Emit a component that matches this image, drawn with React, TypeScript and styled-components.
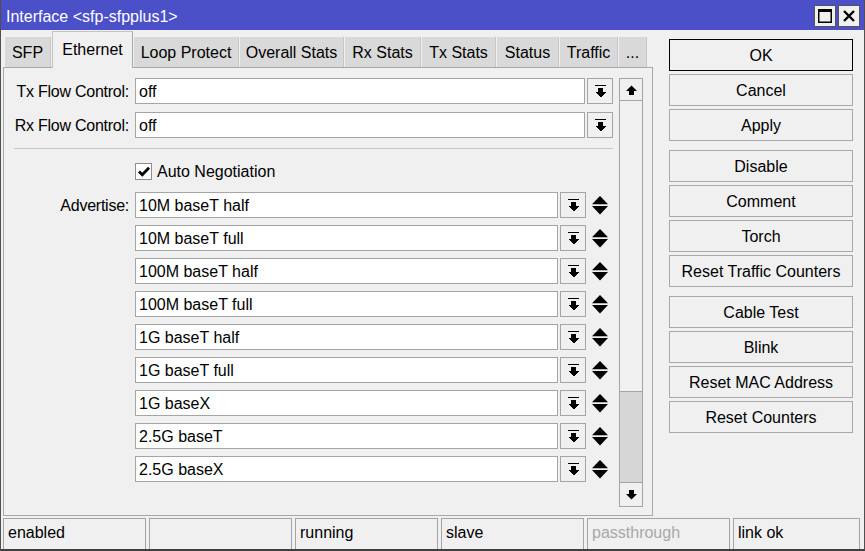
import React from "react";
import styled, { createGlobalStyle } from "styled-components";

const GlobalStyle = createGlobalStyle`
  html, body { margin: 0; padding: 0; background: #f0f0f0; }
  body { font-family: "Liberation Sans", Arial, sans-serif; font-size: 16px; color: #000; }
  * { box-sizing: border-box; }
`;

const Window = styled.div`
  width: 865px;
  height: 551px;
  display: flex;
  flex-direction: column;
  background: #f0f0f0;
  border-left: 1px solid #505050;
  border-right: 1px solid #505050;
  border-bottom: 2px solid #404040;
  overflow: hidden;
`;

const TitleBar = styled.div`
  height: 30px;
  flex: none;
  background: #4b4fc8;
  display: flex;
  align-items: center;
  padding: 1px 4px 0 6px;
  margin: 0 -1px;
`;

const TitleText = styled.div`
  flex: 1;
  color: #fff;
  font-size: 16px;
  padding-top: 2px;
  white-space: nowrap;
`;

const TitleButtons = styled.div`
  display: flex;
  gap: 2px;
  margin-right: 1px;
`;

const TitleButton = styled.div`
  width: 22px;
  height: 22px;
  background: #f0f0f0;
  border: 1px solid #555;
  display: flex;
  align-items: center;
  justify-content: center;
`;

const Main = styled.div`
  height: 486px;
  flex: none;
  display: flex;
  padding: 1px 0 0 2px;
`;

const LeftColumn = styled.div`
  width: 650px;
  display: flex;
  flex-direction: column;
`;

const TabBar = styled.div`
  height: 36px;
  display: flex;
  align-items: flex-end;
  padding-left: 2px;
`;

const Tab = styled.div<{ $active?: boolean; $w: number }>`
  width: ${(p) => p.$w}px;
  margin-right: 1px;
  height: ${(p) => (p.$active ? 37 : 30)}px;
  margin-bottom: ${(p) => (p.$active ? -1 : 0)}px;
  position: relative;
  z-index: ${(p) => (p.$active ? 2 : 1)};
  background: ${(p) => (p.$active ? "#f0f0f0" : "#d9d9d9")};
  border-top: ${(p) => (p.$active ? "1px solid #c4c4c4" : "none")};
  border-left: ${(p) => (p.$active ? "1px solid #c4c4c4" : "none")};
  border-right: 1px solid ${(p) => (p.$active ? "#a8a8a8" : "#c6c6c6")};
  display: flex;
  align-items: center;
  justify-content: center;
  padding-top: 2px;
  padding-bottom: ${(p) => (p.$active ? 3 : 0)}px;
  white-space: nowrap;
  font-size: 16px;
`;

const Panel = styled.div`
  height: 449px;
  border: 1px solid #a8a8a8;
  display: flex;
  padding: 10px 9px 8px 0;
`;

const Content = styled.div`
  flex: 1;
  display: flex;
  flex-direction: column;
`;

const FieldGroup = styled.div<{ $gap: number; $top?: number }>`
  display: flex;
  flex-direction: column;
  gap: ${(p) => p.$gap}px;
  margin-top: ${(p) => p.$top ?? 0}px;
`;

const FieldRow = styled.div`
  display: flex;
  align-items: center;
  height: 26px;
`;

const Label = styled.div`
  width: 125px;
  margin-right: 6px;
  padding-top: 2px;
  text-align: right;
  white-space: nowrap;
  letter-spacing: -0.25px;
  font-size: 16px;
`;

const Field = styled.div`
  flex: 1;
  height: 26px;
  background: #fff;
  border: 1px solid #a5a5a5;
  display: flex;
  align-items: center;
  padding: 2px 0 0 3px;
  font-size: 16px;
  white-space: nowrap;
`;

const DropButton = styled.div`
  width: 26px;
  height: 26px;
  margin-left: 2px;
  background: #f0f0f0;
  border: 1px solid #a5a5a5;
  display: flex;
  align-items: center;
  justify-content: center;
`;

const UpDownCell = styled.div`
  width: 27px;
  height: 26px;
  display: flex;
  align-items: center;
  justify-content: center;
`;

const Separator = styled.div`
  height: 1px;
  background: #c6c6c6;
  margin: 10px 0 0 10px;
`;

const CheckRow = styled.div`
  display: flex;
  align-items: center;
  gap: 5px;
  height: 17px;
  margin-top: 14px;
  padding-left: 131px;
  font-size: 16px;
`;

const CheckText = styled.span`
  padding-top: 0;
`;

const CheckBox = styled.div`
  width: 17px;
  height: 17px;
  background: #fff;
  border: 1px solid #8e8e8e;
  display: flex;
  align-items: center;
  justify-content: center;
`;

const Scrollbar = styled.div`
  width: 24px;
  margin-left: 6px;
  border: 1px solid #a5a5a5;
  display: flex;
  flex-direction: column;
  background: #d6d6d6;
`;

const ScrollButton = styled.div<{ $down?: boolean }>`
  height: ${(p) => (p.$down ? 24 : 22)}px;
  background: #f0f0f0;
  border-top: ${(p) => (p.$down ? "1px solid #a5a5a5" : "none")};
  border-bottom: ${(p) => (p.$down ? "none" : "1px solid #a5a5a5")};
  display: flex;
  align-items: center;
  justify-content: center;
`;

const ScrollThumb = styled.div`
  height: 291px;
  background: #f0f0f0;
  border-bottom: 1px solid #a5a5a5;
`;

const ScrollTrack = styled.div`
  flex: 1;
  background: #d6d6d6;
`;

const ButtonColumn = styled.div`
  width: 184px;
  margin: 8px 0 0 16px;
  display: flex;
  flex-direction: column;
  gap: 9px;
`;

const ButtonGroup = styled.div`
  display: flex;
  flex-direction: column;
  gap: 3px;
`;

const Button = styled.div<{ $primary?: boolean }>`
  height: 32px;
  background: #f0f0f0;
  border: 1px solid ${(p) => (p.$primary ? "#000" : "#a8a8a8")};
  display: flex;
  align-items: center;
  justify-content: center;
  padding-top: 2px;
  font-size: 16px;
  white-space: nowrap;
`;

const StatusBar = styled.div`
  height: 33px;
  flex: none;
  display: flex;
  gap: 3px;
  padding: 2px 4px 0 2px;
`;

const StatusCell = styled.div<{ $muted?: boolean; $w?: number }>`
  ${(p) => (p.$w ? `width: ${p.$w}px;` : "flex: 1;")}
  border-top: 1px solid #a5a5a5;
  border-left: 1px solid #a5a5a5;
  border-right: 1px solid #a5a5a5;
  display: flex;
  align-items: center;
  padding-left: 4px;
  padding-bottom: 3px;
  color: ${(p) => (p.$muted ? "#a8a8a8" : "#000")};
  font-size: 16px;
  white-space: nowrap;
`;

const DropIcon = () => (
  <svg width="11" height="13" viewBox="0 0 11 13" shapeRendering="crispEdges">
    <rect x="0" y="0" width="11" height="1" fill="#000" />
    <rect x="3" y="3" width="5" height="4" fill="#000" />
    <polygon points="0,7 11,7 5.5,12.5" fill="#000" />
  </svg>
);

const UpDownIcon = () => (
  <svg width="16" height="19" viewBox="0 0 16 19">
    <polygon points="8,0 16,8.3 0,8.3" fill="#000" />
    <polygon points="0,10 16,10 8,18.5" fill="#000" />
  </svg>
);

const ArrowIcon = ({ up }: { up?: boolean }) => (
  <svg width="11" height="10" viewBox="0 0 11 10" style={up ? { transform: "rotate(180deg)" } : undefined}>
    <rect x="3" y="0" width="5" height="4" fill="#000" />
    <polygon points="0,4 11,4 5.5,9.5" fill="#000" />
  </svg>
);

const MaxIcon = () => (
  <svg width="14" height="14" viewBox="0 0 14 14">
    <rect x="0.75" y="0.75" width="12.5" height="12.5" fill="none" stroke="#000" strokeWidth="1.5" />
    <rect x="0" y="0" width="14" height="3" fill="#000" />
  </svg>
);

const CloseIcon = () => (
  <svg width="12" height="12" viewBox="0 0 12 12">
    <path d="M1 1 L11 11 M11 1 L1 11" stroke="#000" strokeWidth="2.4" />
  </svg>
);

const CheckIcon = () => (
  <svg width="12" height="11" viewBox="0 0 12 11">
    <path d="M1 5.5 L4.3 8.8 L11 1.8" fill="none" stroke="#000" strokeWidth="2.8" />
  </svg>
);

const tabs: { name: string; w: number; active?: boolean }[] = [
  { name: "SFP", w: 46 },
  { name: "Ethernet", w: 81, active: true },
  { name: "Loop Protect", w: 105 },
  { name: "Overall Stats", w: 104 },
  { name: "Rx Stats", w: 76 },
  { name: "Tx Stats", w: 74 },
  { name: "Status", w: 62 },
  { name: "Traffic", w: 58 },
  { name: "...", w: 28 },
];

const advertise = [
  "10M baseT half",
  "10M baseT full",
  "100M baseT half",
  "100M baseT full",
  "1G baseT half",
  "1G baseT full",
  "1G baseX",
  "2.5G baseT",
  "2.5G baseX",
];

const buttonGroups = [
  ["OK", "Cancel", "Apply"],
  ["Disable", "Comment", "Torch", "Reset Traffic Counters"],
  ["Cable Test", "Blink", "Reset MAC Address", "Reset Counters"],
];

const status: { text: string; muted?: boolean; w?: number }[] = [
  { text: "enabled", w: 143 },
  { text: "", w: 143 },
  { text: "running", w: 143 },
  { text: "slave", w: 143 },
  { text: "passthrough", muted: true, w: 143 },
  { text: "link ok" },
];

export default function App() {
  return (
    <>
      <GlobalStyle />
      <Window>
        <TitleBar>
          <TitleText>Interface &lt;sfp-sfpplus1&gt;</TitleText>
          <TitleButtons>
            <TitleButton>
              <MaxIcon />
            </TitleButton>
            <TitleButton>
              <CloseIcon />
            </TitleButton>
          </TitleButtons>
        </TitleBar>
        <Main>
          <LeftColumn>
            <TabBar>
              {tabs.map((t) => (
                <Tab key={t.name} $w={t.w} $active={t.active}>
                  {t.name}
                </Tab>
              ))}
            </TabBar>
            <Panel>
              <Content>
                <FieldGroup $gap={8}>
                  <FieldRow>
                    <Label>Tx Flow Control:</Label>
                    <Field>off</Field>
                    <DropButton>
                      <DropIcon />
                    </DropButton>
                  </FieldRow>
                  <FieldRow>
                    <Label>Rx Flow Control:</Label>
                    <Field>off</Field>
                    <DropButton>
                      <DropIcon />
                    </DropButton>
                  </FieldRow>
                </FieldGroup>
                <Separator />
                <CheckRow>
                  <CheckBox>
                    <CheckIcon />
                  </CheckBox>
                  <CheckText>Auto Negotiation</CheckText>
                </CheckRow>
                <FieldGroup $gap={7} $top={12}>
                  {advertise.map((a, i) => (
                    <FieldRow key={a}>
                      <Label>{i === 0 ? "Advertise:" : ""}</Label>
                      <Field>{a}</Field>
                      <DropButton>
                        <DropIcon />
                      </DropButton>
                      <UpDownCell>
                        <UpDownIcon />
                      </UpDownCell>
                    </FieldRow>
                  ))}
                </FieldGroup>
              </Content>
              <Scrollbar>
                <ScrollButton>
                  <ArrowIcon up />
                </ScrollButton>
                <ScrollThumb />
                <ScrollTrack />
                <ScrollButton $down>
                  <ArrowIcon />
                </ScrollButton>
              </Scrollbar>
            </Panel>
          </LeftColumn>
          <ButtonColumn>
            {buttonGroups.map((g, gi) => (
              <ButtonGroup key={gi}>
                {g.map((b) => (
                  <Button key={b} $primary={b === "OK"}>
                    {b}
                  </Button>
                ))}
              </ButtonGroup>
            ))}
          </ButtonColumn>
        </Main>
        <StatusBar>
          {status.map((s, i) => (
            <StatusCell key={i} $muted={s.muted} $w={s.w}>
              {s.text}
            </StatusCell>
          ))}
        </StatusBar>
      </Window>
    </>
  );
}
